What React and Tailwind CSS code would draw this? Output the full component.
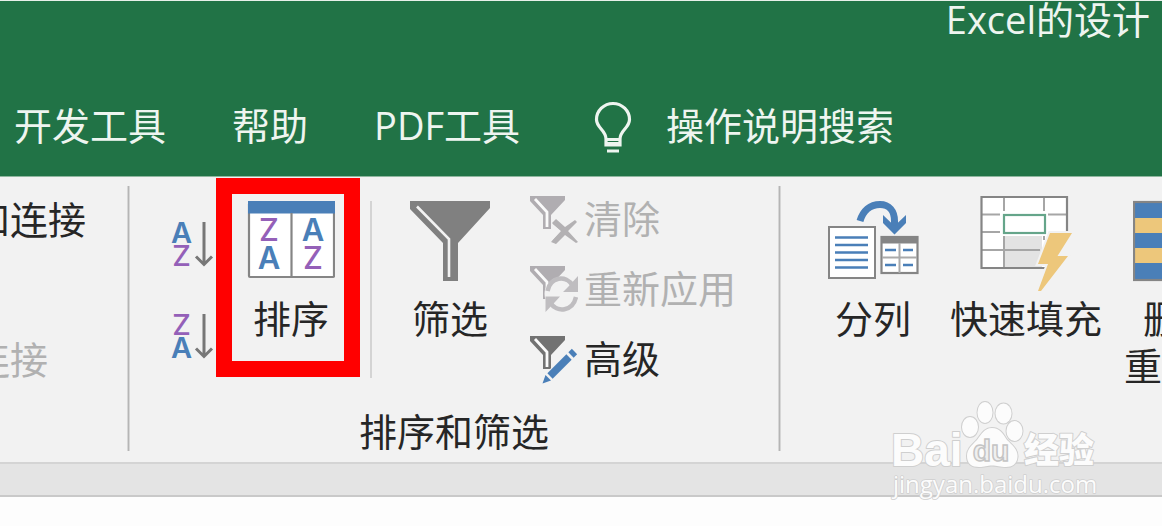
const GRAY = '#858585';
const BLUE = '#4a7fb8';
const PURPLE = '#9460b8';
const PANEL = '#f2f2f2';

function Letter({ x, y, children, size = 31 }) {
  return (
    <text
      x={x}
      y={y}
      textAnchor="middle"
      fontSize={size}
      fontFamily="Inter, sans-serif"
      fontWeight={children === 'A' ? 600 : 500}
      fill={children === 'A' ? BLUE : PURPLE}
    >
      {children}
    </text>
  );
}

function SortOrderIcon({ top, bottom }) {
  return (
    <svg viewBox="0 0 46 48" className="h-12 w-[46px]" aria-hidden="true">
      <Letter x={11.5} y={23} size={29}>{top}</Letter>
      <Letter x={11.5} y={46} size={29}>{bottom}</Letter>
      <path d="M34 2V45M26 36.500L34 44.500L42 36.500" fill="none" stroke="#777" strokeWidth="3" />
    </svg>
  );
}

function SortIcon() {
  return (
    <svg viewBox="0 0 88 96" className="h-24 w-[88px]" aria-hidden="true">
      <rect x="2" y="8" width="85" height="74" rx="1" fill="#fff" stroke={GRAY} strokeWidth="2.200" />
      <rect x="1" y="6" width="87" height="12.500" fill={BLUE} />
      <path d="M44.500 18V82" stroke={GRAY} strokeWidth="2.200" />
      <Letter x={22} y={46}>Z</Letter>
      <Letter x={22} y={74}>A</Letter>
      <Letter x={66} y={46}>A</Letter>
      <Letter x={66} y={74}>Z</Letter>
    </svg>
  );
}

function FilterIcon() {
  return (
    <svg viewBox="0 0 80 96" className="h-24 w-20" aria-hidden="true">
      <path d="M0 6H80V13L48 48V86H33V48L0 14Z" fill="#808080" />
      <path d="M7 11.500L39 44V82" fill="none" stroke={PANEL} strokeWidth="2.600" />
    </svg>
  );
}

function SmallFunnel({ color }) {
  return (
    <>
      <path d="M0 0H35V4L21 19V33H13V19L0 5Z" fill={color} />
      <path d="M5 3L17 16V31" fill="none" stroke="#fafafa" strokeWidth="2.800" />
    </>
  );
}

function ClearIcon() {
  return (
    <svg viewBox="0 0 48 48" className="size-12 shrink-0" aria-hidden="true">
      <SmallFunnel color="#b0adb1" />
      <path d="M22 27L26 23L35 31L45 24L47 26L38 35L48 46L46 47L35 39L26 48L21 46L31 35Z" fill="#b3b1b3" />
      <path d="M24 26L35 35L24 46" fill="none" stroke="#b3b1b3" strokeWidth="4.500" />
    </svg>
  );
}

function ReapplyIcon() {
  return (
    <svg viewBox="0 0 48 48" className="size-12 shrink-0" aria-hidden="true">
      <SmallFunnel color="#b0adb1" />
      <circle cx="31.500" cy="28" r="17" fill={PANEL} />
      <g fill="none" stroke="#bfbdc0" strokeWidth="4.500">
        <path d="M17.500 25C20 11 36 8 43 20" />
        <path d="M46 31C43 45 27 48 20 36" />
      </g>
      <path d="M48 10V26H33L38 21ZM15.500 46V30.500H30L25 36Z" fill="#bfbdc0" />
    </svg>
  );
}

function AdvancedIcon() {
  return (
    <svg viewBox="0 0 48 48" className="size-12 shrink-0" aria-hidden="true">
      <SmallFunnel color="#727272" />
      <path d="M20 41L42 19" stroke={PANEL} strokeWidth="11" />
      <path d="M20 40L39 21" stroke={BLUE} strokeWidth="7.500" />
      <path d="M41 19L44.500 15.500" stroke={BLUE} strokeWidth="7.500" />
      <path d="M12.500 47.500L15.500 39L21 44.500Z" fill={BLUE} />
    </svg>
  );
}

function TextToColumnsIcon() {
  return (
    <svg viewBox="0 0 92 96" className="h-24 w-[92px]" aria-hidden="true">
      <rect x="2" y="32" width="46" height="51" fill="#fff" stroke={GRAY} strokeWidth="2" />
      <path d="M8 42.500H41M8 50H41M8 57.500H41M8 65H41M8 72.500H41" stroke={BLUE} strokeWidth="2.400" />
      <rect x="54.500" y="42" width="36" height="36" fill="#fff" stroke={GRAY} strokeWidth="2.200" />
      <path d="M54 45H91" stroke={GRAY} strokeWidth="7" />
      <path d="M72.500 48V78M55 62.500H90" stroke="#aaa" strokeWidth="2" />
      <path d="M58 55H69M76 55H86M58 70H69M76 70H86" stroke={BLUE} strokeWidth="2.400" />
      <path d="M33 26C36 16 43 9.500 53 9.500C62 9.500 67.500 16 67.500 26V34" fill="none" stroke={BLUE} strokeWidth="7" />
      <path d="M56 20L67.500 31L79 20V28L67.500 39.500L56 28Z" fill={BLUE} />
    </svg>
  );
}

function FlashFillIcon() {
  return (
    <svg viewBox="0 0 93 96" className="h-24 w-[93px]" aria-hidden="true">
      <path d="M1 2H87V37L65 73H1Z" fill="#fff" />
      <path d="M25 41H62V72H25Z" fill="#e3e3e3" />
      <g fill="none" stroke="#a6a6a6" strokeWidth="2">
        <path d="M24 2V16M64 2V16M2 19.500H20M68 19.500H87M2 37H20M24 41V73M64 41V45M2 55H60" />
      </g>
      <path d="M87 37V2H1.500V73H66" fill="none" stroke={GRAY} strokeWidth="2.200" />
      <rect x="24" y="20" width="41" height="18" fill="#fff" stroke="#65a58a" strokeWidth="2.200" />
      <path
        d="M70 38H92L77.500 61H88L61 96H58L68 69H58Z"
        fill="#edc77b"
        stroke={PANEL}
        strokeWidth="4"
        style={{ paintOrder: 'stroke' }}
      />
    </svg>
  );
}

function RemoveDuplicatesIcon() {
  return (
    <svg viewBox="0 0 96 96" className="h-24 w-24" aria-hidden="true">
      <rect x="1" y="7" width="94" height="78" fill={BLUE} />
      <path d="M1 23H95V38H1ZM1 53H95V68H1Z" fill="#edc77b" />
      <rect x="1" y="7" width="94" height="78" fill="none" stroke={GRAY} strokeWidth="2.200" />
    </svg>
  );
}

function BulbIcon() {
  return (
    <svg viewBox="0 0 38 52" className="h-[52px] w-[38px]" fill="none" stroke="#eef5f0" strokeWidth="3.200" aria-hidden="true">
      <path d="M12 38C12 29 2.500 27 2.500 18.500A16.500 16 0 0 1 35.500 18.500C35.500 27 26 29 26 38V44H12Z" />
      <path d="M12 38.500H26M13 50H25" />
      <path d="M12 43H26" strokeWidth="4" />
    </svg>
  );
}

function BigButton({ icon, lines, className = '' }) {
  return (
    <button type="button" className={`flex shrink-0 flex-col items-center pt-[9px] ${className}`}>
      {icon}
      <span className="mt-1 flex flex-col leading-[47px] whitespace-nowrap">
        {lines.map((line) => (
          <span key={line}>{line}</span>
        ))}
      </span>
    </button>
  );
}

function SmallButton({ icon, label, disabled }) {
  return (
    <button type="button" disabled={disabled} className="flex items-center gap-1.5 whitespace-nowrap disabled:text-[#b1b1b1]">
      {icon}
      <span className="pb-1">{label}</span>
    </button>
  );
}

function GroupDivider() {
  return <div className="w-[3px] shrink-0 border-x border-[#d6d6d6] bg-[#b5b5b5]" />;
}

function Watermark() {
  return (
    <svg viewBox="0 0 212 106" className="pointer-events-none absolute top-[398px] left-[888px] h-[106px] w-[212px]" role="img" aria-label="Baidu">
      <g fill="#fcfcfc" stroke="#cfcfcf" strokeWidth="2" strokeLinejoin="round" style={{ paintOrder: 'stroke' }}>
        <text x="3" y="68" fontSize="46" fontWeight="700" fontFamily="'Liberation Sans', sans-serif">Bai</text>
        <ellipse cx="82" cy="29" rx="8" ry="10" />
        <ellipse cx="97" cy="14.500" rx="7.500" ry="10.500" />
        <ellipse cx="115.500" cy="15.500" rx="8" ry="10" />
        <ellipse cx="126.500" cy="33" rx="8" ry="10" />
        <path d="M104 30C112 30 115 36 119 42C124 47 130 51 129.500 59C129 66 124 69 118 69C112 69 109 67.500 104 67.500C99 67.500 97 69 91 69C84 69 79 66 79 58C79 51 84 47 89 42C93 37 96 30 104 30Z" />
        <text x="136" y="65" fontSize="35" fontWeight="900" fontFamily="'Noto Sans CJK SC', sans-serif">经验</text>
        <text x="5" y="95" fontSize="24" fontWeight="500" strokeWidth="1.500" fontFamily="'Open Sans', sans-serif">jingyan.baidu.com</text>
      </g>
      <text x="103" y="63" textAnchor="middle" fontSize="30" fontWeight="700" fontFamily="'Liberation Sans', sans-serif" fill="#f0f0f0" stroke="#c4c4c4" strokeWidth="1.500">du</text>
    </svg>
  );
}

export default function App() {
  return (
    <div className="relative flex min-h-screen flex-col overflow-hidden bg-[#fdfdfd] font-['Open_Sans','Noto_Sans_CJK_SC',sans-serif] text-[38px] leading-10 text-[#262626]">
      <header className="border-t border-[#e8f0ea] bg-[#217346] text-[#eef5f0]">
        <h1 className="pr-3 text-right leading-9">Excel的设计</h1>
        <nav className="flex items-center gap-[66px] pt-16 pb-[23px] pl-3.5 whitespace-nowrap">
          <a href="#developer" className="pb-1">开发工具</a>
          <a href="#help" className="pb-1">帮助</a>
          <a href="#pdf" className="pb-1">PDF工具</a>
          <button type="button" className="ml-2 flex items-center gap-[34px]">
            <BulbIcon />
            <span className="pb-1">操作说明搜索</span>
          </button>
        </nav>
      </header>

      <section className="flex overflow-hidden border-t border-[#8fb79f] bg-[#f2f2f2] pt-[9px] pb-[11px]">
        <div className="-ml-7 flex w-[155px] shrink-0 flex-col items-start gap-[100px] pt-[13px] whitespace-nowrap">
          <button type="button">和连接</button>
          <button type="button" disabled className="text-[#b1b1b1]">连接</button>
        </div>
        <GroupDivider />
        <div className="flex shrink-0 flex-col gap-[27px]">
          <div className="flex items-start pr-[42px] pl-10">
            <div className="flex flex-col gap-11 pt-[34px]">
              <button type="button" aria-label="升序"><SortOrderIcon top="A" bottom="Z" /></button>
              <button type="button" aria-label="降序"><SortOrderIcon top="Z" bottom="A" /></button>
            </div>
            <div className="relative flex w-36 justify-center pl-1.5">
              <BigButton icon={<SortIcon />} lines={['排序']} />
              <div className="pointer-events-none absolute inset-x-0 -top-2 h-[199px] border-16 border-[#ff0000]" />
            </div>
            <div className="mt-[15px] ml-2.5 h-[177px] w-0.5 bg-[#d4d4d4]" />
            <BigButton icon={<FilterIcon />} lines={['筛选']} className="ml-[18px] w-[120px]" />
            <div className="ml-5 flex flex-col gap-[22px] pt-2.5">
              <SmallButton icon={<ClearIcon />} label="清除" disabled />
              <SmallButton icon={<ReapplyIcon />} label="重新应用" disabled />
              <SmallButton icon={<AdvancedIcon />} label="高级" />
            </div>
          </div>
          <p className="text-center">排序和筛选</p>
        </div>
        <GroupDivider />
        <div className="flex items-start gap-[22px] pl-[37px]">
          <BigButton icon={<TextToColumnsIcon />} lines={['分列']} className="w-[110px]" />
          <BigButton icon={<FlashFillIcon />} lines={['快速填充']} />
          <BigButton icon={<RemoveDuplicatesIcon />} lines={['删除', '重复值']} />
        </div>
      </section>

      <div className="h-[35px] border-y-2 border-t-[#d4d4d4] border-b-[#c9c9c9] bg-[#e4e4e4]" />
      <Watermark />
    </div>
  );
}
